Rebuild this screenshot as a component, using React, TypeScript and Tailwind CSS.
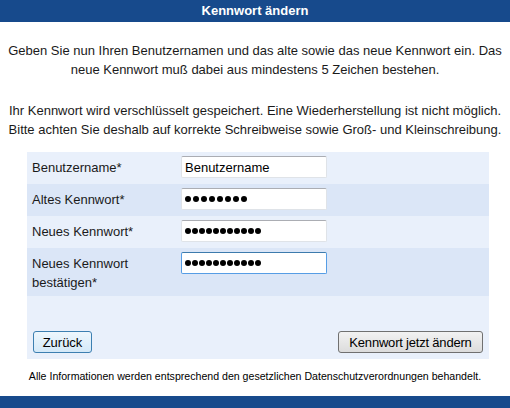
import React from "react";

function Dots({ n, tight }: { n: number; tight?: boolean }) {
  return (
    <div className={"flex items-center " + (tight ? "gap-[1px]" : "gap-[2px]")}>
      {Array.from({ length: n }).map((_, i) => (
        <span key={i} className="block w-[6px] h-[6px] rounded-full bg-black" />
      ))}
    </div>
  );
}

function Field({ children, focused }: { children: React.ReactNode; focused?: boolean }) {
  return (
    <div
      className={
        "w-[146px] h-[22px] bg-white rounded-[2px] flex items-center pl-[3px] border " +
        (focused
          ? "border-[#569de5] border-t-[#3d7bad]"
          : "border-[#dfe3e8] border-t-[#abadb3]")
      }
    >
      {children}
    </div>
  );
}

export default function App() {
  const rows: { label: React.ReactNode; field: React.ReactNode; dark: boolean; tall?: boolean }[] = [
    {
      label: "Benutzername*",
      field: (
        <Field>
          <span className="text-[13px] leading-none text-black">Benutzername</span>
        </Field>
      ),
      dark: false,
    },
    { label: "Altes Kennwort*", field: <Field><Dots n={8} /></Field>, dark: true },
    { label: "Neues Kennwort*", field: <Field><Dots n={11} tight /></Field>, dark: false },
    {
      label: (
        <>
          Neues Kennwort
          <br />
          bestätigen*
        </>
      ),
      field: (
        <Field focused>
          <Dots n={11} tight />
        </Field>
      ),
      dark: true,
      tall: true,
    },
  ];

  return (
    <div
      className="w-[510px] h-[408px] bg-white flex flex-col text-[#1a1a1a] overflow-hidden"
      style={{ fontFamily: '"Liberation Sans", Arial, sans-serif' }}
    >
      <div className="h-[22px] bg-[#174a8c] text-white font-bold text-[13px] flex items-center justify-center">
        Kennwort ändern
      </div>

      <p className="mt-[19px] text-center text-[13px] leading-[19px] px-[4px]">
        Geben Sie nun Ihren Benutzernamen und das alte sowie das neue Kennwort ein. Das
        <br />
        neue Kennwort muß dabei aus mindestens 5 Zeichen bestehen.
      </p>

      <p className="mt-[22px] text-center text-[13px] leading-[19px] px-[2px]">
        Ihr Kennwort wird verschlüsselt gespeichert. Eine Wiederherstellung ist nicht möglich.
        <br />
        Bitte achten Sie deshalb auf korrekte Schreibweise sowie Groß- und Kleinschreibung.
      </p>

      <div className="mt-[13px] ml-[27px] w-[462px] bg-[#e9f0fb] flex flex-col">
        {rows.map((r, i) => (
          <div
            key={i}
            className={
              "flex items-start pl-[5px] " +
              (r.tall ? "h-[48px] " : "h-[32px] ") +
              (r.dark ? "bg-[#dbe6f7]" : "bg-[#e9f0fb]")
            }
          >
            <div className="w-[149px] pt-[6px] text-[13px] leading-[19px]">{r.label}</div>
            <div className="pt-[4px]">{r.field}</div>
          </div>
        ))}
        <div className="h-[35px]" />
        <div className="flex justify-between items-center pl-[6px] pr-[6px] pb-[6px]">
          <button className="h-[22px] w-[59px] rounded-[3px] border border-[#3c7fb1] bg-gradient-to-b from-[#eef7fd] to-[#d4e9f8] text-[13px] text-black leading-none">
            Zurück
          </button>
          <button className="h-[22px] w-[145px] rounded-[3px] border border-[#707070] bg-gradient-to-b from-[#f2f2f2] to-[#dcdcdc] text-[13px] text-black leading-none tracking-[-0.2px]">
            Kennwort jetzt ändern
          </button>
        </div>
      </div>

      <p className="mt-[11px] text-center text-[10.6px] leading-[12px] text-black">
        Alle Informationen werden entsprechend den gesetzlichen Datenschutzverordnungen behandelt.
      </p>

      <div className="mt-auto h-[12px] bg-[#174a8c]" />
    </div>
  );
}
